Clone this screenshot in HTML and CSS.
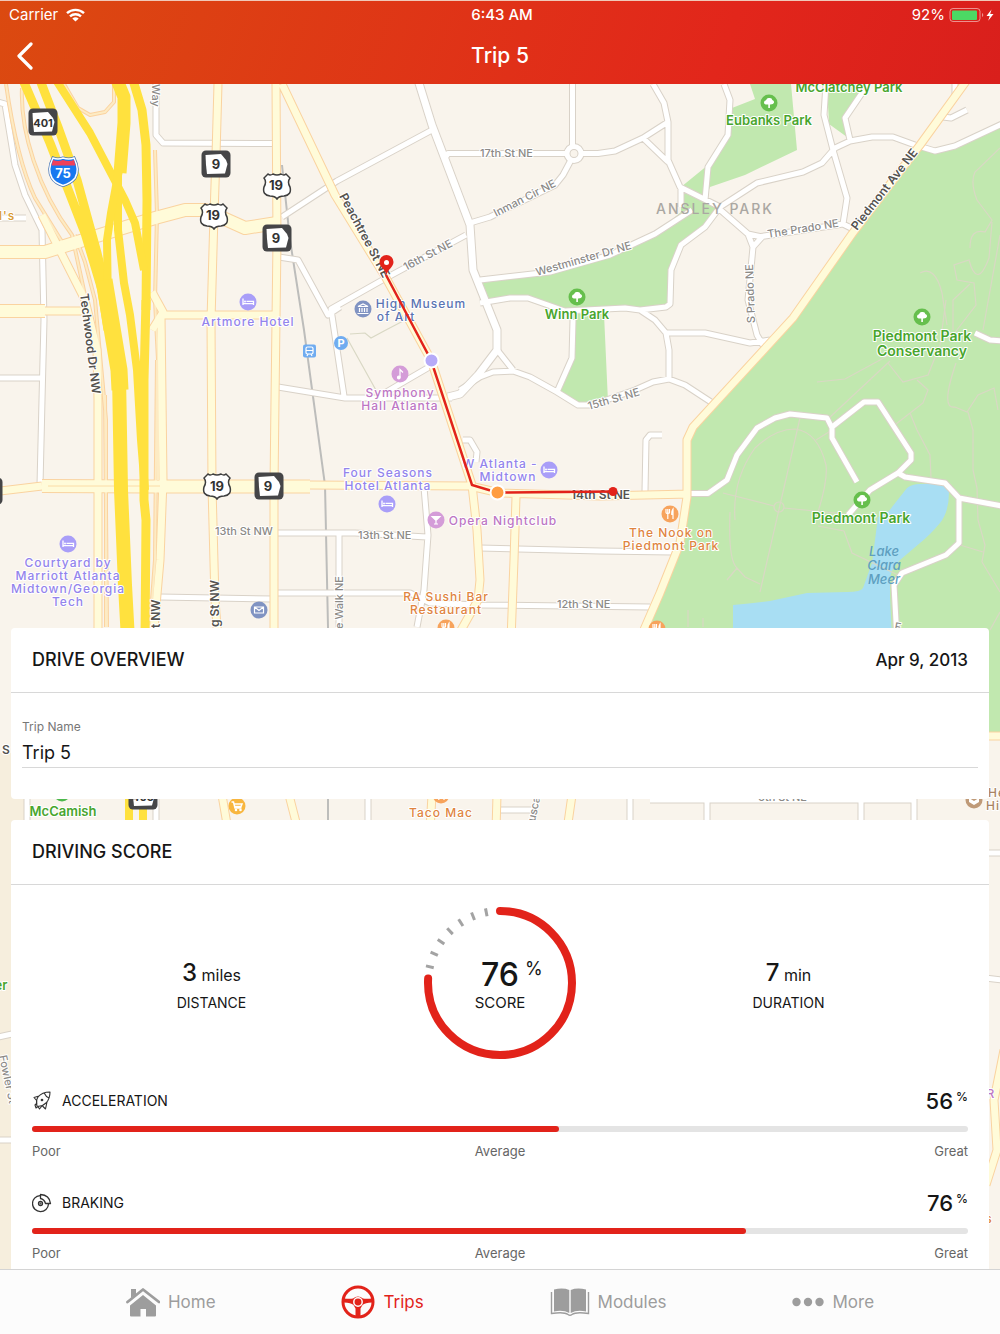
FILE: index.html
```html
<!DOCTYPE html>
<html lang="en">
<head>
<meta charset="utf-8">
<meta name="viewport" content="width=device-width, initial-scale=1">
<title>Trip 5</title>
<link rel="stylesheet" href="styles.css">
</head>
<body>
<header class="top">
  <div class="status">
    <div class="status-left">
      <span>Carrier</span>
      <svg width="19" height="14" viewBox="0 0 19 14" fill="none" stroke="#fff" stroke-width="2.4" aria-hidden="true"><path d="M1 5.2a12.4 12.4 0 0 1 17 0M4 8.4a8.2 8.2 0 0 1 11 0"/><path d="M6.3 10.6a4.8 4.8 0 0 1 6.4 0L9.5 13.6Z" fill="#fff" stroke="none"/></svg>
    </div>
    <span class="clock">6:43 AM</span>
    <div class="status-right">
      <span>92%</span>
      <svg width="46" height="16" viewBox="0 0 46 16" aria-hidden="true"><rect x="1" y="1.5" width="30" height="13" rx="3" fill="none" stroke="#fff" stroke-opacity=".5"/><rect x="3" y="3.5" width="25" height="9.5" rx="1" fill="#4cd964"/><path d="M33 6a2.2 2.2 0 0 1 0 4Z" fill="#fff" opacity=".5"/><path d="M42.500 2.5 37.500 9h3.200l-1.500 4.800L44.500 7h-3.300Z" fill="#fff"/></svg>
    </div>
  </div>
  <div class="nav">
    <button class="back" type="button" aria-label="Back"><svg width="18" height="28" viewBox="0 0 18 28" fill="none" stroke="#fff" stroke-width="3.2" stroke-linecap="round" stroke-linejoin="round"><path d="M15 2 3 14l12 12"/></svg></button>
    <h1>Trip 5</h1>
  </div>
</header>

<main class="trip">
  <svg class="map" viewBox="0 84 1000 1186" preserveAspectRatio="xMidYMin slice" role="img" aria-label="Map of the trip">
    <defs>
      <g id="lanes">
        <path d="M156 84V135L163 143 277 143.500M-2 102 5 104 15 165 25 195 42 230 44 320 42 400 40 485M0 378H42M0 218H26M282 217 337 181 432 130M445 158 448 153.500H567M581 153.500H598L615 151 643 138 668 122M572.500 146V84M571 160 563 175 555 185 490 217 470 223M466 235 386 278 331 309 344 396M279 257 298 260 328 315 340 307M480 280 550 272 610 255 655 234 692 210M480 303 510 298H528L565 311 625 308 640 310 666 307 670 304 671 270 681 245 705 227 720 207M640 310 655 320 666 333 669 350 669 378M635 390 653 382 669 379 685 385 711 402M460 390 480 377 493 372 513 371 530 377 557 392 578 405H592L635 390M498 351 513 370M557 392 572 358 573 320M666 333 705 333 750 343 770 340M753 247 748 300 757 335 764 347M758 237 843 224 855 230M717 207 748 234 753 247 762 237 748 234M720 207 757 183 803 172 822 163 835 148 850 141 872 137H893L915 145 935 151 955 146 1002 124M826 84 824 115 833 150 847 198 843 224M864 90 845 118 850 140M724 84 730 100 728 135 708 167 705 200M653 84 664 103 668 122V160L680 187 720 207M643 138 668 162M681 187V207M955 84V96M943 117 951 118 967 110M277 533 355 533 427 537M424 487 428 535 424 590 417 627M339 533V627M277 593H410L430 603 480 605 650 607M480 548 600 551 672 552M160 597 272 599M645 491 646 440 650 435H662M463 440H470L477 452 476 462M378 397 400 384 431 366M278 387 345 398H452M368 795V830M630 795V830M707 795V830M861 795V830M914 795V830M650 800H914M500 810H535M27 795V830M985 853H1002M985 978 1002 980M-2 1037 12 1034M-2 1140H12M156 795V830"/>
        <circle cx="574" cy="153.500" r="7"/>
      </g>
      <g id="parkroads">
        <path d="M690 493.500H708L727 480 737 455 757 428 775 418 790 414 827 418 832 428V438L857 482M832 427 864 402H878L911 453V460L898 473 870 490 848 515M898 473 905 477 945 483 959 498V543L946 555 902 573 894 585 897 640M959 498 1002 506M975 333 990 340 1002 341"/>
      </g>
      <g id="avenues">
        <path d="M218 84 216 155 214 215 211 320 212 487 215 600 218 640M276 84 277 240 276 320 275 400 274 487V640M282 84 335 195 386 278 431 360 472 485 477 530 480 580 478 600 460 632M163 315H276M152 292 163 312 152 330M161 315 163 480 160 560 153 640M0 491 42 486M310 485 470 486 500 493 600 496 690 494M967 80 920 145 852 234 793 318 693 427 687 440V497L680 543 660 593 643 632M516 497 514 560 511 640M222 795 228 830M289 795 298 830M432 795 430 830M497 795 496 830M572 795 567 830M985 736H1002M1004 1050 994 1100 997 1150 986 1185"/>
      </g>
      <g id="boulevards">
        <path d="M0 252H45L155 218 185 210H205L245 228 277 223M0 311H45M42 486 150 486.500H310"/>
      </g>
      <g id="techwood">
        <path d="M42 215 85 300 97 350 98 400V640M45 311H88"/>
      </g>
      <g id="ramps">
        <path d="M6 84C14 140 24 175 35 198L64 245M22 88C20 130 38 190 72 235L86 300M64 84 78 108 90 115 105 112 114 102V84M75 235 85 262 95 300 106 420V627M155 150 157 215 155 300 158 360 158 480M157 360 155 560 150 627M105 395 107 627"/>
      </g>
      <symbol id="ga" viewBox="0 0 30 28"><rect x=".5" y=".5" width="29" height="27" rx="4.500" fill="#454547"/><path d="M4.500 5 20 4 25 10 26.500 14 24 23.500 6 24 5 15Z" fill="#fff"/></symbol>
      <symbol id="us" viewBox="0 0 30 28"><path d="M6 2Q8 4 11 2Q15 4 19 2Q22 4 24 2L28 6Q25 10 28 15Q30 23 22 24Q17 24 15 27Q13 24 8 24Q0 23 2 15Q5 10 2 6Z" fill="#fff" stroke="#3e3e3e" stroke-width="1.500"/></symbol>
      <symbol id="tree" viewBox="0 0 18 18"><circle cx="9" cy="9" r="8.500" fill="#66bf4d"/><path d="M8.300 14V10.500Q4 11 4 8.500Q4 6.500 6 6.200Q7 3.500 9.300 4Q12 3.700 12.300 6Q14.500 6.500 14 8.700Q13.500 10.700 9.900 10.500V14Z" fill="#fff"/></symbol>
      <symbol id="bed" viewBox="0 0 18 18"><circle cx="9" cy="9" r="8.500" fill="#a99ef8"/><path d="M4 5.500V12M4 10.700H14.500V12M14.500 10.500V8.300H7.500" fill="none" stroke="#fff" stroke-width="1.300"/><circle cx="6" cy="8.500" r="1" fill="#fff"/></symbol>
      <symbol id="food" viewBox="0 0 18 18"><circle cx="9" cy="9" r="8.500" fill="#f7a35c"/><path d="M5 4V7.500Q5 8.500 6.800 8.500Q8.500 8.500 8.500 7.500V4M6.800 4V14M12 14V4Q10.500 6 10.800 9.500H12" fill="none" stroke="#fff" stroke-width="1.200"/></symbol>
    </defs>

    <rect y="84" width="1000" height="1186" fill="#f9f4ec"/>
    <path d="M0 753H26V1270H0Z" fill="#f6eedd"/>
    <g fill="#c1e8af">
      <path d="M1000 126 955 147 935 152 920 147 852 235 793 320 693 430 688 440V497L680 545 648 627V640H985V735H1000Z"/>
      <path d="M750 84 755 99 732 108 728 135 708 165 681 187V212L655 234 610 255 550 272 481 281 487 300 528 298 565 311 640 309 669 305 671 270 681 245 705 227 720 207 705 200 710 187 745 175 797 150 791 84Z"/>
      <path d="M573 314H604L608 402H576L557 392 572 358Z"/>
      <path d="M827 84H864V92L845 118 847 137 829 124Z"/>
    </g>
    <path d="M733 640V605Q752 603 770 601L807 593 847 592Q861 592 863 588L872 563 878 517Q888 514 892 507L907 488Q912 484 920 484H936Q948 485 949 492 949 512 940 523 930 535 920 543L900 560Q890 570 890 580V597L892 640Z" fill="#a8def3"/>

    <g fill="none" stroke="#d9d8c4" stroke-width="1.200">
      <path d="M735 520Q732 480 755 448 775 429 795 429 818 432 826 465 828 480 818 512M730 512Q728 560 737 568L745 577 760 584M800 418 760 592M723 493 774 506M784 508 845 514M816 440 832 430M829 418 890 361M817 382 845 379 893 353M888 363 903 382 928 375 940 345 946 300M917 380 928 390 923 403 896 424M910 413 917 430 930 455 931 478M956 363Q940 410 955 407L967 412 978 395 994 388 998 410M968 412 973 430V470L977 488 978 520 985 545 982 562 1000 592M818 526 844 531 852 553 898 575M960 545 983 552M737 568 727 580M688 610V627M703 618V627M1000 148 975 172Q970 182 977 200L992 220 985 232Q970 228 970 248M992 222 989 258Q977 290 969 260L954 265 957 280 974 283 976 305 953 335M970 284 953 300V330M920 273Q935 265 942 293L947 325M1000 235 983 330M990 630 1000 612M350 334 365 333 371 338 384 331 405 320M347 338 377 392"/>
      <circle cx="779" cy="507" r="5"/>
    </g>
    <path d="M282 165 290 240 304 330 325 485 328 627V830" fill="none" stroke="#bdbdbb" stroke-width="2"/>

    <g fill="none" stroke-linejoin="round">
      <use href="#lanes" class="lane-edge"/><use href="#parkroads" class="lane-edge"/>
      <path class="street-edge" d="M418 80 432 125 470 225 473 270 497 330V350L478 375 460 394 448 397"/>
      <use href="#lanes" class="lane"/><use href="#parkroads" class="lane"/>
      <path class="street" d="M418 80 432 125 470 225 473 270 497 330V350L478 375 460 394 448 397"/>
      <use href="#ramps" class="ramp-edge"/>
      <use href="#avenues" class="avenue-edge"/><use href="#techwood" class="avenue-edge"/><use href="#boulevards" class="boulevard-edge"/>
      <use href="#ramps" class="ramp"/>
      <use href="#avenues" class="avenue"/><use href="#techwood" class="avenue"/><use href="#boulevards" class="boulevard"/>
      <path d="M48 486H160" stroke="#fbdca6"/>
      <g stroke="#ffe13e">
        <path stroke-width="9" d="M23 80 50 143 85 233 102 290 108 330M40 80 58 127 77 180 97 253 112 315M133 80 142 110 146 145 147 200 146 310"/>
        <path stroke-width="8" d="M56 80 90 133 113 177 125 200 135 223 144 270M118 175V230L124 283 130 315 137 370 141 440 145 490"/>
        <path stroke-width="13" d="M117 80 124 97V123L120 173"/>
        <path stroke-width="8" d="M119 170 111 213 107 240 108 310"/>
        <path stroke-width="17" d="M104 280 109 310 119 370 120 390"/>
        <path stroke-width="14" d="M119 375 121 490 125 585 128 640"/>
        <path stroke-width="9" d="M146 300 144 380 144 500 146 520 145 640"/>
        <path stroke-width="8" d="M129 790V830M143 790V830"/>
      </g>
    </g>

    <g class="road">
      <text x="480" y="157">17th St NE</text>
      <text transform="translate(496 217) rotate(-27)">Inman Cir NE</text>
      <text transform="translate(406 271) rotate(-28)">16th St NE</text>
      <text transform="translate(537 276) rotate(-16)">Westminster Dr NE</text>
      <text transform="translate(768 238) rotate(-9)">The Prado NE</text>
      <text transform="translate(755 323) rotate(-92)">S Prado NE</text>
      <text transform="translate(589 410) rotate(-16)">15th St NE</text>
      <text x="215" y="535">13th St NW</text>
      <text x="358" y="539">13th St NE</text>
      <text x="557" y="608">12th St NE</text>
      <text x="758" y="801">6th St NE</text>
      <text transform="translate(152 84) rotate(90)">Way</text>
      <text transform="translate(343 629) rotate(-90)">e Walk NE</text>
      <text transform="translate(535 822) rotate(-78)">usca</text>
      <text transform="translate(-1 1056) rotate(78)">Fowler St</text>
      <text transform="translate(894 630) rotate(10)">F</text>
    </g>
    <g class="road main-road">
      <text transform="translate(339 196) rotate(62)">Peachtree St NE</text>
      <text transform="translate(857 231) rotate(-52)">Piedmont Ave NE</text>
      <text transform="translate(80 294) rotate(83)">Techwood Dr NW</text>
      <text x="571" y="499">14th St NE</text>
      <text transform="translate(160 628) rotate(-90)">t NW</text>
      <text transform="translate(219 627) rotate(-90)">g St NW</text>
      <text x="2" y="754">S</text>
    </g>
    <text class="district" x="656" y="214">ANSLEY PARK</text>

    <g class="poi park">
      <text x="849" y="92">McClatchey Park</text><text x="769" y="125">Eubanks Park</text><text x="577" y="319">Winn Park</text>
      <g class="large"><text x="922" y="341">Piedmont Park</text><text x="922" y="356">Conservancy</text><text x="861" y="523">Piedmont Park</text></g>
      <text x="63" y="816">McCamish</text><text x="1" y="990">er</text>
    </g>
    <g class="poi hotel">
      <text x="248" y="326">Artmore Hotel</text>
      <text x="68" y="567">Courtyard by</text><text x="68" y="580">Marriott Atlanta</text><text x="68" y="593">Midtown/Georgia</text><text x="68" y="606">Tech</text>
      <text x="388" y="477">Four Seasons</text><text x="388" y="490">Hotel Atlanta</text>
      <text x="500" y="468">W Atlanta -</text><text x="508" y="481">Midtown</text>
    </g>
    <g class="poi music">
      <text x="400" y="397">Symphony</text><text x="400" y="410">Hall Atlanta</text><text x="503" y="525">Opera Nightclub</text><text x="991" y="1098">R</text>
    </g>
    <g class="poi eat">
      <text x="671" y="537">The Nook on</text><text x="671" y="550">Piedmont Park</text>
      <text x="446" y="601">RA Sushi Bar</text><text x="446" y="614">Restaurant</text><text x="441" y="817">Taco Mac</text><text x="989" y="1223">s</text>
    </g>
    <g class="poi museum"><text x="421" y="308">High Museum</text><text x="396" y="321">of Art</text></g>
    <g class="poi gold"><text x="7" y="220">l's</text></g>
    <g class="poi brown"><text x="997" y="797">He</text><text x="993" y="810">Hi</text></g>
    <g class="lake"><text x="884" y="556">Lake</text><text x="884" y="570">Clara</text><text x="884" y="584">Meer</text></g>

    <use href="#tree" x="760" y="94" width="18" height="18"/><use href="#tree" x="568" y="288" width="18" height="18"/><use href="#tree" x="913" y="308" width="18" height="18"/><use href="#tree" x="853" y="491" width="18" height="18"/>
    <use href="#bed" x="239" y="293" width="18" height="18"/><use href="#bed" x="59" y="535" width="18" height="18"/><use href="#bed" x="378" y="495" width="18" height="18"/><use href="#bed" x="540" y="461" width="18" height="18"/>
    <use href="#food" x="661" y="505" width="18" height="18"/><use href="#food" x="648" y="620" width="18" height="18"/><use href="#food" x="437" y="619" width="18" height="18"/><use href="#food" x="432" y="786" width="18" height="18"/>
    <circle cx="62" cy="793" r="8.500" fill="#4cb84c"/>
    <circle cx="974" cy="800" r="8.500" fill="#bf9a78"/><path d="M969 798l5 3 5-3v4l-5 3-5-3Z" fill="#fff"/>
    <g fill="none" stroke="#fff" stroke-width="1.200">
      <circle cx="363" cy="309" r="8.500" fill="#8093c2" stroke="none"/><path d="M358 306.500 363 304 368 306.500ZM359.500 308V312M362 308V312M364.500 308V312M367 308V312M357.500 313.500H368.500"/>
      <circle cx="400" cy="374" r="8.500" fill="#d49cd8" stroke="none"/><path d="M400 377.500V369.500L403 372.500"/><circle cx="398.800" cy="377.500" r="1.300" fill="#fff"/>
      <circle cx="436" cy="520" r="8.500" fill="#d49cd8" stroke="none"/><path d="M432 516.500H440L436 520.500ZM436 519V524M434 524H438" fill="#fff"/>
      <circle cx="259" cy="610" r="8.500" fill="#8093c2" stroke="none"/><path d="M254.500 607H263.500V613H254.500ZM254.500 607 259 610.500 263.500 607"/>
      <circle cx="237" cy="806" r="8.500" fill="#f8b63f" stroke="none"/><path d="M231.500 802H233.500L235 808H241.500M234 804H242L241 806.500H235" stroke-width="1.500"/><circle cx="236" cy="810" r=".7"/><circle cx="240.500" cy="810" r=".7"/>
      <rect x="303" y="344.500" width="13" height="13" rx="2" fill="#70acf0" stroke="none"/><rect x="306" y="347" width="7" height="7" rx="1.500"/><path d="M306 350.500H313M307 356l1-2M312 356l-1-2"/>
      <circle cx="341" cy="343" r="7" fill="#70acf0" stroke="none"/>
    </g>
    <text class="sign parking" x="341" y="347">P</text>

    <g class="sign">
      <use href="#ga" x="28" y="108" width="30" height="28"/><text class="narrow" x="43" y="127">401</text>
      <use href="#ga" x="201" y="150" width="30" height="28"/><text x="216" y="169">9</text>
      <use href="#ga" x="262" y="224" width="30" height="28"/><text x="276" y="243">9</text>
      <use href="#ga" x="254" y="472" width="30" height="28"/><text x="268" y="491">9</text>
      <use href="#ga" x="-27" y="477" width="30" height="28"/><use href="#ga" x="128" y="782" width="30" height="28"/><text class="narrow" x="143" y="801">403</text>
      <use href="#us" x="262" y="172" width="30" height="28"/><text x="276" y="190">19</text>
      <use href="#us" x="199" y="202" width="30" height="28"/><text x="213" y="220">19</text>
      <use href="#us" x="202" y="472" width="30" height="28"/><text x="217" y="491">19</text>
    </g>
    <path d="M53 158Q58 160 63 158Q69 160 74 158Q80 170 75 178Q71 183 63 185.500Q55 183 52 178Q47 170 53 158Z" fill="#1878f0" stroke="#4a78b8" stroke-width="3"/>
    <path d="M53 158Q58 160 63 158Q69 160 74 158Q80 170 75 178Q71 183 63 185.500Q55 183 52 178Q47 170 53 158Z" fill="#1878f0" stroke="#fff" stroke-width="1.500"/>
    <path d="M53 160Q58 162 63 160Q69 162 74 160L75.500 165.500H51.500Z" fill="#f0405a"/>
    <text class="sign interstate" x="63" y="178">75</text>

    <path d="M386 275 431 360 472 485 497 492.500 613 491.500" fill="none" stroke="#e2231a" stroke-width="2.500"/>
    <circle cx="613" cy="491.500" r="4.500" fill="#e2231a"/>
    <circle cx="431.500" cy="360.500" r="7" fill="#b6aaf8" stroke="#fff" stroke-width="2"/>
    <circle cx="497.500" cy="492.500" r="7" fill="#ff9d42" stroke="#fff" stroke-width="2"/>
    <path d="M386.500 275C385 269 379.500 267 379.500 262A7 7 0 0 1 393.500 262C393.500 267 388 269 386.500 275Z" fill="#e2231a"/><circle cx="386.500" cy="262.500" r="2.500" fill="#fff"/>
  </svg>

  <div class="cards">
    <section class="card">
      <div class="card-head"><h2>DRIVE OVERVIEW</h2><time datetime="2013-04-09">Apr 9, 2013</time></div>
      <div class="field">
        <label for="trip-name">Trip Name</label>
        <input id="trip-name" type="text" value="Trip 5">
      </div>
    </section>

    <section class="card score-card">
      <div class="card-head"><h2>DRIVING SCORE</h2></div>
      <div class="metrics">
        <div class="metric"><p><b>3</b> miles</p><p class="caption">DISTANCE</p></div>
        <div class="ring">
          <svg viewBox="-76 -76 152 152" aria-hidden="true">
            <circle r="72" fill="none" stroke="#e2231a" stroke-width="8" stroke-linecap="round" pathLength="100" stroke-dasharray="76 100" transform="rotate(-90)"/>
            <g stroke="#a3a3a3" stroke-width="3"><path d="M0-76V-68" transform="rotate(-11)"/><path d="M0-76V-68" transform="rotate(-22)"/><path d="M0-76V-68" transform="rotate(-33)"/><path d="M0-76V-68" transform="rotate(-44)"/><path d="M0-76V-68" transform="rotate(-55)"/><path d="M0-76V-68" transform="rotate(-66)"/><path d="M0-76V-68" transform="rotate(-77)"/></g>
          </svg>
          <div class="ring-text"><p class="total"><b>76</b><span>%</span></p><p>SCORE</p></div>
        </div>
        <div class="metric"><p><b>7</b> min</p><p class="caption">DURATION</p></div>
      </div>

      <div class="rating">
        <div class="rating-head">
          <svg width="20" height="20" viewBox="0 0 20 20" fill="none" stroke="#333" stroke-width="1.100" stroke-linejoin="round" stroke-linecap="round" aria-hidden="true"><path d="M18 1Q10 1 6 6Q3.500 10 5 15Q10 16 14 12Q18 8 18 1ZM12.500 2.500Q14 6 17 7M7 5 2 6.500 5 10M15 11 13.500 18 10.500 15M5 12 3 14 4 17 6 15.500 7.500 18 9.500 15.500"/><circle cx="10" cy="9" r=".8" fill="#333"/></svg>
          <h3>ACCELERATION</h3><p class="percent">56<span>%</span></p>
        </div>
        <div class="bar"><div class="bar-fill" style="width:56.3%"></div></div>
        <div class="scale"><span>Poor</span><span>Average</span><span>Great</span></div>
      </div>
      <div class="rating">
        <div class="rating-head">
          <svg width="20" height="20" viewBox="0 0 20 20" fill="none" stroke="#333" stroke-width="1.300" stroke-linejoin="round" aria-hidden="true"><path d="M8 2.600A8 8 0 1 0 16.500 11"/><path d="M8.500 1.500Q17.500 2 18.500 10.500H13.500Q12.500 6.500 8.500 5.500Z"/><circle cx="8.500" cy="10.500" r="2"/><circle cx="8.500" cy="10.500" r=".4"/></svg>
          <h3>BRAKING</h3><p class="percent">76<span>%</span></p>
        </div>
        <div class="bar"><div class="bar-fill" style="width:76.3%"></div></div>
        <div class="scale"><span>Poor</span><span>Average</span><span>Great</span></div>
      </div>
    </section>
  </div>
</main>

<nav class="tabs" aria-label="Main">
  <a href="#home"><svg width="34" height="32" viewBox="0 0 34 32" fill="#9d9d9d" aria-hidden="true"><path d="M17 9 30 19.500V29.500Q30 30.500 29 30.500H20V23H14.500V30.500H5Q4 30.500 4 29.500V19.500Z"/><path d="M1.500 16 17 3.500 33 16" fill="none" stroke="#9d9d9d" stroke-width="2.800" stroke-linecap="round" stroke-linejoin="round"/><path d="M5 3H10V8L5 12Z"/></svg>Home</a>
  <a href="#trips" class="active" aria-current="page"><svg width="34" height="34" viewBox="0 0 34 34" fill="none" stroke="#e2231a" aria-hidden="true"><circle cx="17" cy="17" r="15" stroke-width="3"/><path d="M3 13.500Q9 14 12 13.500Q17 9.500 22 13.500Q25 14 31 13.500V17.500Q24 17.500 21.500 20L19.500 23.500V31H14.500V23.500L12.500 20Q10 17.500 3 17.500Z" fill="#e2231a" stroke="none"/><circle cx="17" cy="17" r="4.200" stroke="#fcfcfc" stroke-width="1.500"/></svg>Trips</a>
  <a href="#modules"><svg width="40" height="30" viewBox="0 0 40 30" fill="#9d9d9d" aria-hidden="true"><path d="M4 2.500Q13 .5 19.300 3V26Q13 22.500 4 24.500ZM36 2.500Q27 .5 20.700 3V26Q27 22.500 36 24.500Z"/><path d="M1.500 5V26.500Q14 24.500 18 27.500Q20 29 22 27.500Q26 24.500 38.500 26.500V5" fill="none" stroke="#9d9d9d" stroke-width="1.400"/></svg>Modules</a>
  <a href="#more"><svg width="32" height="10" viewBox="0 0 32 10" fill="#9d9d9d" aria-hidden="true"><circle cx="4.500" cy="5" r="4.200"/><circle cx="16" cy="5" r="4.200"/><circle cx="27.500" cy="5" r="4.200"/></svg>More</a>
</nav>
</body>
</html>
```
FILE: styles.css
```css
* { box-sizing: border-box; }
body {
  margin: 0;
  min-height: 100vh;
  display: flex;
  flex-direction: column;
  font-family: Inter, "Liberation Sans", sans-serif;
  font-size: 16px;
  line-height: 20px;
  color: #161616;
}
h1, h2, h3, p { margin: 0; font-weight: 400; }

/* Header */
.top {
  border-top: 1px solid #f0c8b8;
  background: linear-gradient(110deg, #db4a10 0%, #e2261b 72%, #d91f1c 100%);
  color: #fff;
}
.status {
  display: grid;
  grid-template-columns: 1fr auto 1fr;
  align-items: center;
  height: 27px;
  padding: 0 5px 0 9px;
  font-size: 15px;
}
.status-left, .status-right { display: flex; align-items: center; gap: 8px; }
.status-right { justify-content: flex-end; gap: 4px; }
.clock { font-weight: 500; }
.nav {
  display: grid;
  grid-template-columns: 48px 1fr 48px;
  align-items: center;
  height: 56px;
}
.back {
  display: flex;
  padding: 0 0 0 16px;
  border: 0;
  background: none;
}
h1 { font-size: 21px; font-weight: 500; text-align: center; }

/* Map */
.trip { position: relative; flex: 1; display: flex; flex-direction: column; }
.map { position: absolute; inset: 0; width: 100%; height: 100%; }
.lane-edge { stroke: #d9d2c8; stroke-width: 7px; }
.lane { stroke: #fff; stroke-width: 5px; }
.street-edge { stroke: #d9d2c8; stroke-width: 9px; }
.street { stroke: #fff; stroke-width: 7px; }
.ramp-edge { stroke: #fbd3a0; stroke-width: 4px; }
.ramp { stroke: #fdebc4; stroke-width: 2px; }
.avenue-edge { stroke: #fad3a0; stroke-width: 9px; }
.avenue { stroke: #fffbd9; stroke-width: 7px; }
.boulevard-edge { stroke: #fad3a0; stroke-width: 14px; }
.boulevard { stroke: #fffbd9; stroke-width: 12px; }
.road, .poi, .lake { paint-order: stroke; stroke: #fff; stroke-width: 2px; stroke-linejoin: round; }
.road { font-size: 11px; font-weight: 500; fill: #8c8a87; }
.main-road { font-size: 12px; font-weight: 600; fill: #55534f; }
.district { font-size: 14px; font-weight: 500; letter-spacing: 2px; fill: #aaa7a2; }
.poi { font-size: 12px; font-weight: 500; letter-spacing: 1px; text-anchor: middle; }
.park { fill: #48a52d; font-size: 13px; font-weight: 600; letter-spacing: 0; }
.large { font-size: 14px; }
.hotel { fill: #9384ec; }
.music { fill: #bd76c4; }
.eat { fill: #e08440; }
.museum { fill: #5a74b2; }
.gold { fill: #d99a30; }
.brown { fill: #a98462; }
.lake { font-size: 13px; font-style: italic; font-weight: 500; text-anchor: middle; fill: #5e9fc0; stroke: none; }
.sign { font-size: 13px; font-weight: 700; text-anchor: middle; fill: #333; }
.narrow { font-size: 11px; }
.parking { font-size: 11px; fill: #fff; }
.interstate { fill: #fff; }

/* Cards */
.cards {
  position: relative;
  flex: 1;
  display: flex;
  flex-direction: column;
  gap: 21px;
  padding: 544px 11px 0;
}
.card { background: #fff; border-radius: 4px; }
.score-card { flex: 1; border-radius: 4px 4px 0 0; }
.card-head {
  display: flex;
  justify-content: space-between;
  align-items: center;
  height: 65px;
  padding: 0 21px;
  border-bottom: 1px solid #d8d8d8;
  font-size: 17px;
  font-weight: 500;
}
h2 { font-size: 18px; font-weight: 500; }
.field { padding: 26px 11px 31px; }
label { display: block; height: 16px; font-size: 12px; line-height: 16px; color: #777; }
input {
  display: block;
  width: 100%;
  height: 33px;
  padding: 2px 0 0;
  border: 0;
  border-bottom: 1px solid #d8d8d8;
  background: none;
  font: inherit;
  font-size: 18px;
  color: #161616;
}
.metrics {
  display: grid;
  grid-template-columns: 1fr auto 1fr;
  gap: 12px;
  align-items: center;
  padding: 22px 0 0;
}
.metric { text-align: center; padding-top: 10px; }
.metric b { font-size: 24px; font-weight: 500; }
.metric p { line-height: 28px; }
.metric .caption { font-size: 14px; }
.ring { display: grid; width: 152px; height: 152px; }
.ring > * { grid-area: 1 / 1; }
.ring-text { align-self: center; text-align: center; padding-top: 4px; font-size: 15px; }
.total { display: grid; grid-template-columns: 1fr auto 1fr; column-gap: 6px; line-height: 36px; }
.total b { grid-column: 2; font-size: 32px; font-weight: 500; }
.total span { font-size: 18px; line-height: 24px; text-align: left; }
.rating { padding: 26px 21px 0; height: 102px; }
.rating-head { display: flex; align-items: center; gap: 10px; height: 32px; }
h3 { flex: 1; font-size: 14px; }
.percent { display: flex; gap: 3px; font-size: 22px; font-weight: 500; }
.percent span { font-size: 12px; line-height: 12px; }
.bar { height: 6px; margin: 9px 0; border-radius: 3px; background: #e4e4e4; }
.bar-fill { height: 6px; border-radius: 3px; background: #e2231a; }
.scale { display: grid; grid-template-columns: 1fr auto 1fr; font-size: 13px; color: #666; }
.scale span:last-child { text-align: right; }

/* Tab bar */
.tabs {
  position: relative;
  display: flex;
  justify-content: space-evenly;
  align-items: center;
  height: 65px;
  border-top: 1px solid #d4d4d4;
  background: #fcfcfc;
}
.tabs a { display: flex; align-items: center; gap: 8px; font-size: 17px; color: #9d9d9d; text-decoration: none; }
.tabs .active { color: #e2231a; }
```
